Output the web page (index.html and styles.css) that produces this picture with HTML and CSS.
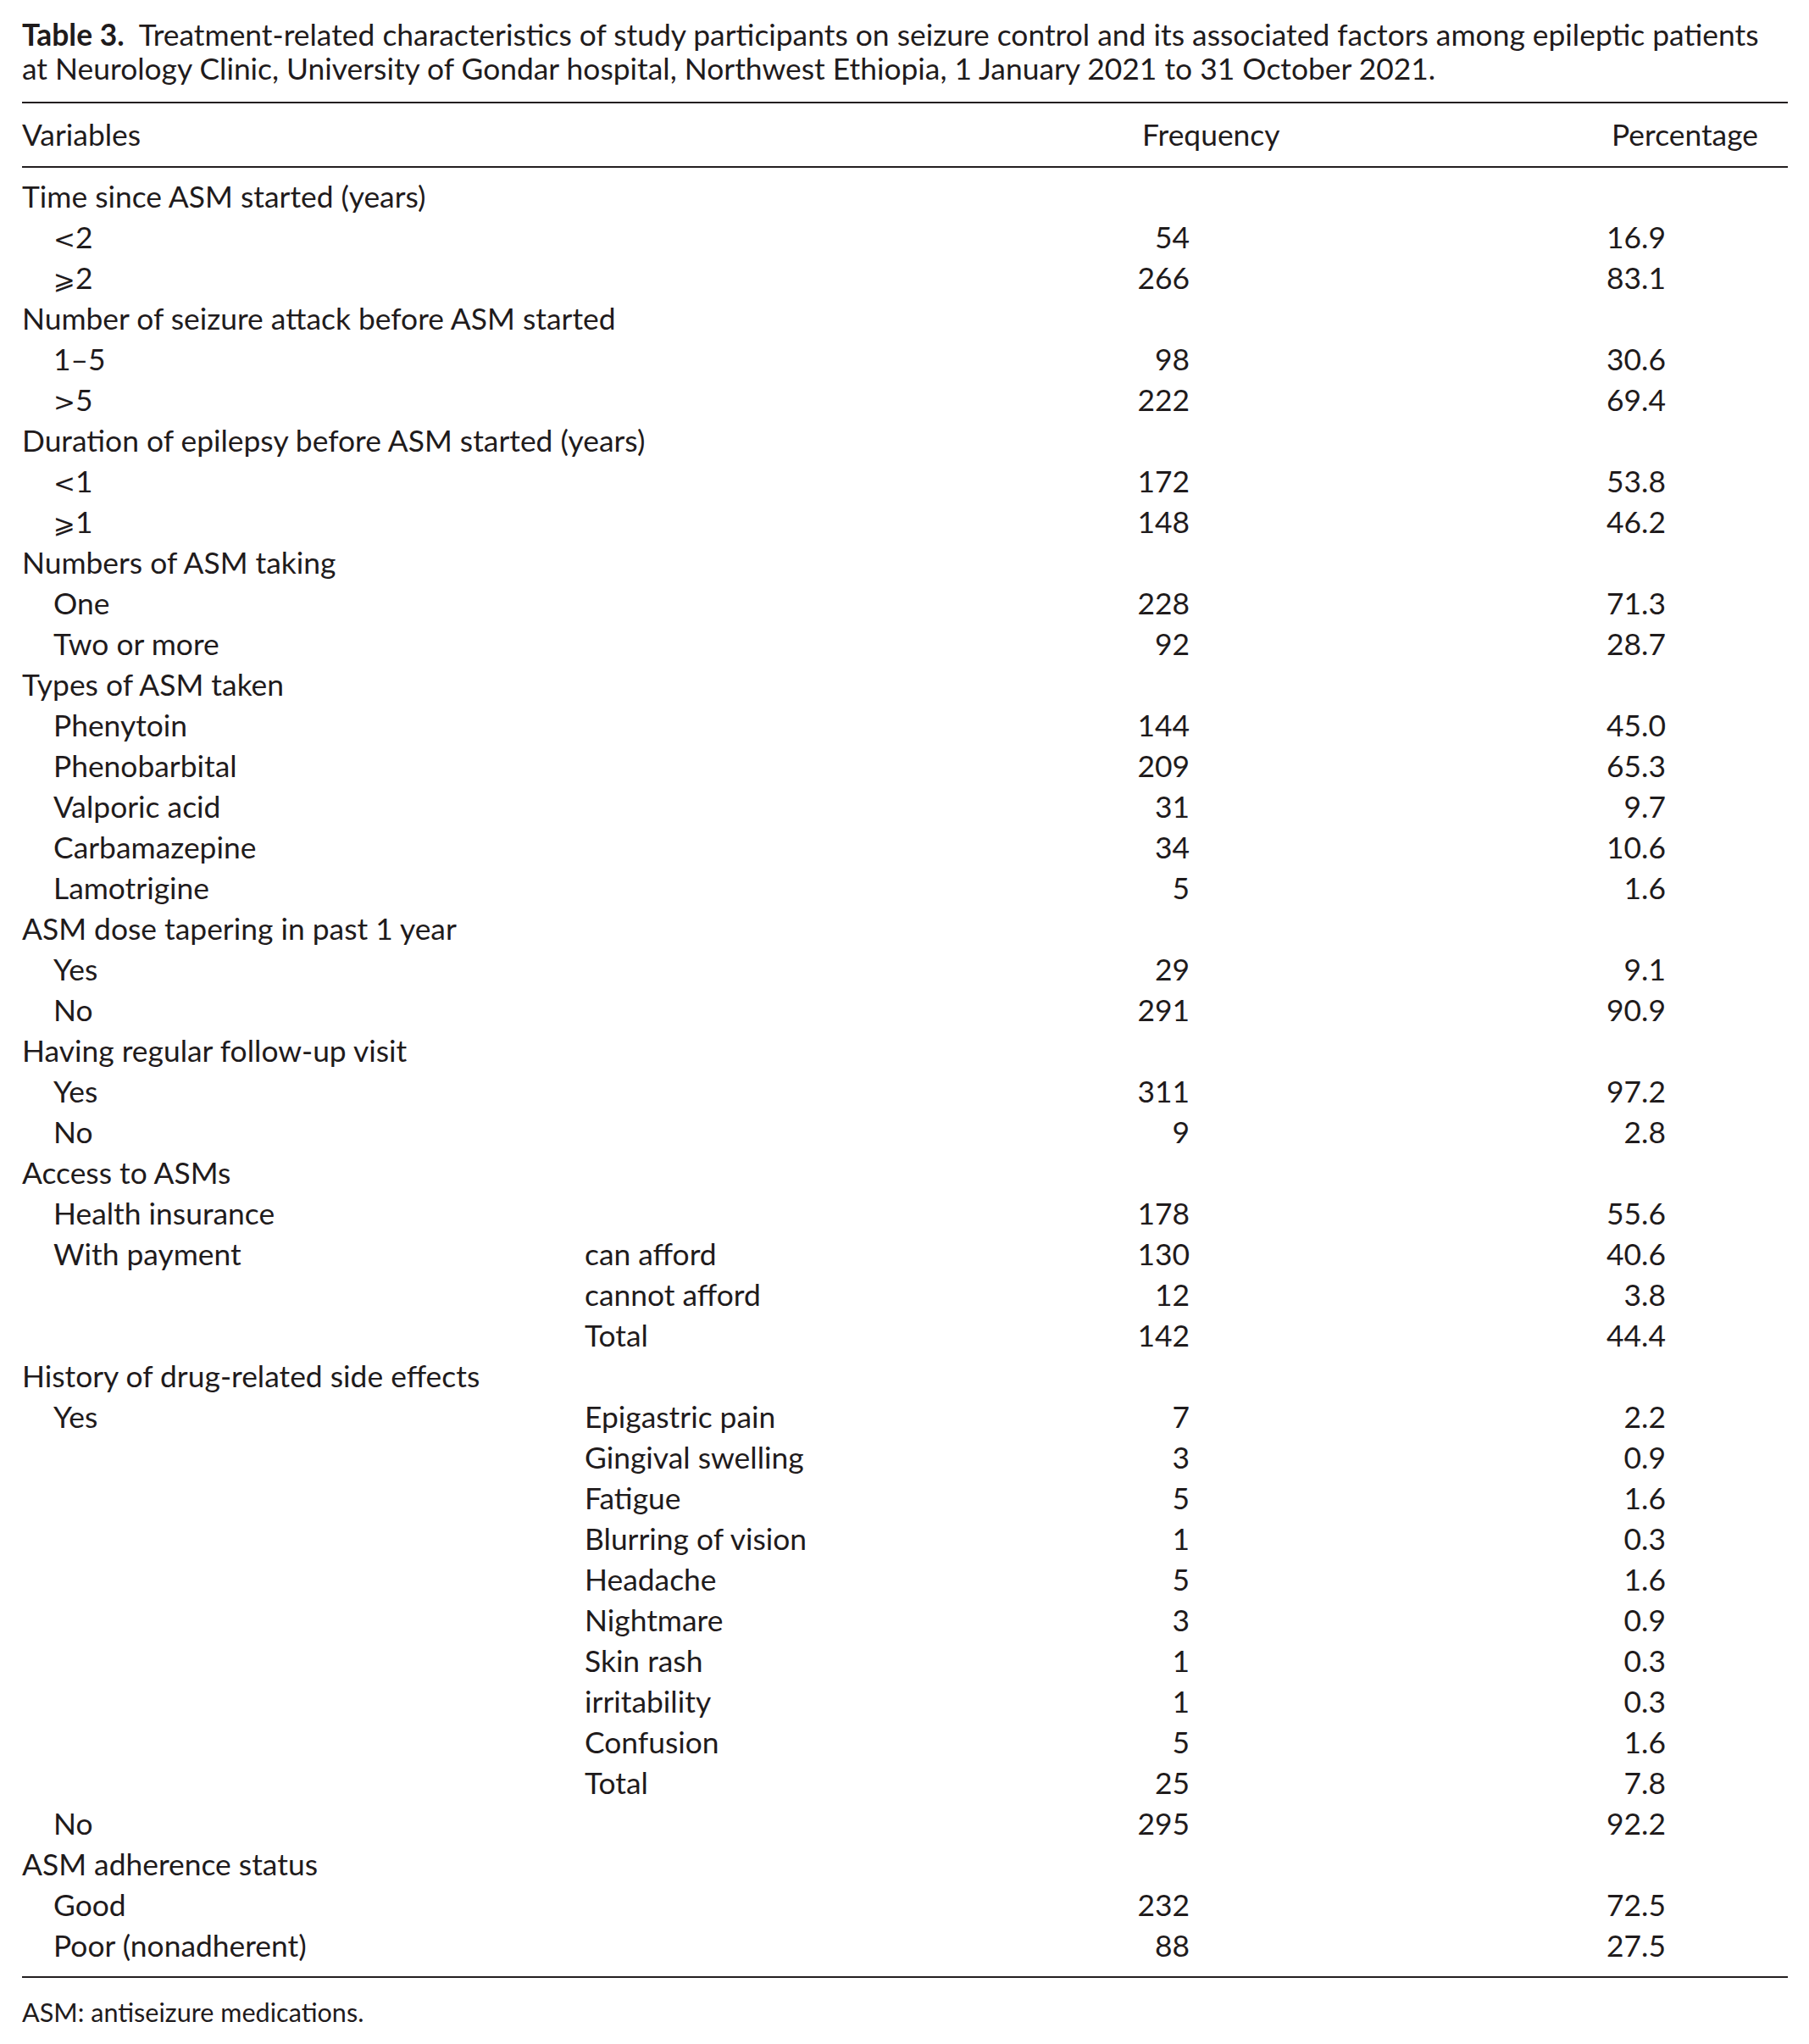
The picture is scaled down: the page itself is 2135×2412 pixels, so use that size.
FILE: index.html
```html
<!DOCTYPE html>
<html lang="en">
<head>
<meta charset="utf-8">
<title>Table 3</title>
<link rel="stylesheet" href="styles.css">
</head>
<body>
<div class="page">
  <p class="caption"><span class="line"><b>Table 3.</b>&nbsp; Treatment-related characteristics of study participants on seizure control and its associated factors among epileptic patients</span><span class="line">at Neurology Clinic, University of Gondar hospital, Northwest Ethiopia, 1 January 2021 to 31 October 2021.</span></p>
  <table class="data">
    <colgroup>
      <col class="c1"><col class="c2"><col class="c3"><col class="c4">
    </colgroup>
    <thead>
      <tr><th>Variables</th><th></th><th>Frequency</th><th>Percentage</th></tr>
    </thead>
    <tbody>
      <tr class="first"><td colspan="4">Time since ASM started (years)</td></tr>
      <tr><td class="ind"><span class="sym">&lt;</span>2</td><td></td><td><span class="f">54</span></td><td><span class="p">16.9</span></td></tr>
      <tr><td class="ind"><span class="sym">⩾</span>2</td><td></td><td><span class="f">266</span></td><td><span class="p">83.1</span></td></tr>
      <tr><td colspan="4">Number of seizure attack before ASM started</td></tr>
      <tr><td class="ind">1–5</td><td></td><td><span class="f">98</span></td><td><span class="p">30.6</span></td></tr>
      <tr><td class="ind"><span class="sym">&gt;</span>5</td><td></td><td><span class="f">222</span></td><td><span class="p">69.4</span></td></tr>
      <tr><td colspan="4">Duration of epilepsy before ASM started (years)</td></tr>
      <tr><td class="ind"><span class="sym">&lt;</span>1</td><td></td><td><span class="f">172</span></td><td><span class="p">53.8</span></td></tr>
      <tr><td class="ind"><span class="sym">⩾</span>1</td><td></td><td><span class="f">148</span></td><td><span class="p">46.2</span></td></tr>
      <tr><td colspan="4">Numbers of ASM taking</td></tr>
      <tr><td class="ind">One</td><td></td><td><span class="f">228</span></td><td><span class="p">71.3</span></td></tr>
      <tr><td class="ind">Two or more</td><td></td><td><span class="f">92</span></td><td><span class="p">28.7</span></td></tr>
      <tr><td colspan="4">Types of ASM taken</td></tr>
      <tr><td class="ind">Phenytoin</td><td></td><td><span class="f">144</span></td><td><span class="p">45.0</span></td></tr>
      <tr><td class="ind">Phenobarbital</td><td></td><td><span class="f">209</span></td><td><span class="p">65.3</span></td></tr>
      <tr><td class="ind">Valporic acid</td><td></td><td><span class="f">31</span></td><td><span class="p">9.7</span></td></tr>
      <tr><td class="ind">Carbamazepine</td><td></td><td><span class="f">34</span></td><td><span class="p">10.6</span></td></tr>
      <tr><td class="ind">Lamotrigine</td><td></td><td><span class="f">5</span></td><td><span class="p">1.6</span></td></tr>
      <tr><td colspan="4">ASM dose tapering in past 1 year</td></tr>
      <tr><td class="ind">Yes</td><td></td><td><span class="f">29</span></td><td><span class="p">9.1</span></td></tr>
      <tr><td class="ind">No</td><td></td><td><span class="f">291</span></td><td><span class="p">90.9</span></td></tr>
      <tr><td colspan="4">Having regular follow-up visit</td></tr>
      <tr><td class="ind">Yes</td><td></td><td><span class="f">311</span></td><td><span class="p">97.2</span></td></tr>
      <tr><td class="ind">No</td><td></td><td><span class="f">9</span></td><td><span class="p">2.8</span></td></tr>
      <tr><td colspan="4">Access to ASMs</td></tr>
      <tr><td class="ind">Health insurance</td><td></td><td><span class="f">178</span></td><td><span class="p">55.6</span></td></tr>
      <tr><td class="ind">With payment</td><td>can afford</td><td><span class="f">130</span></td><td><span class="p">40.6</span></td></tr>
      <tr><td class="ind"></td><td>cannot afford</td><td><span class="f">12</span></td><td><span class="p">3.8</span></td></tr>
      <tr><td class="ind"></td><td>Total</td><td><span class="f">142</span></td><td><span class="p">44.4</span></td></tr>
      <tr><td colspan="4">History of drug-related side effects</td></tr>
      <tr><td class="ind">Yes</td><td>Epigastric pain</td><td><span class="f">7</span></td><td><span class="p">2.2</span></td></tr>
      <tr><td class="ind"></td><td>Gingival swelling</td><td><span class="f">3</span></td><td><span class="p">0.9</span></td></tr>
      <tr><td class="ind"></td><td>Fatigue</td><td><span class="f">5</span></td><td><span class="p">1.6</span></td></tr>
      <tr><td class="ind"></td><td>Blurring of vision</td><td><span class="f">1</span></td><td><span class="p">0.3</span></td></tr>
      <tr><td class="ind"></td><td>Headache</td><td><span class="f">5</span></td><td><span class="p">1.6</span></td></tr>
      <tr><td class="ind"></td><td>Nightmare</td><td><span class="f">3</span></td><td><span class="p">0.9</span></td></tr>
      <tr><td class="ind"></td><td>Skin rash</td><td><span class="f">1</span></td><td><span class="p">0.3</span></td></tr>
      <tr><td class="ind"></td><td>irritability</td><td><span class="f">1</span></td><td><span class="p">0.3</span></td></tr>
      <tr><td class="ind"></td><td>Confusion</td><td><span class="f">5</span></td><td><span class="p">1.6</span></td></tr>
      <tr><td class="ind"></td><td>Total</td><td><span class="f">25</span></td><td><span class="p">7.8</span></td></tr>
      <tr><td class="ind">No</td><td></td><td><span class="f">295</span></td><td><span class="p">92.2</span></td></tr>
      <tr><td colspan="4">ASM adherence status</td></tr>
      <tr><td class="ind">Good</td><td></td><td><span class="f">232</span></td><td><span class="p">72.5</span></td></tr>
      <tr class="last"><td class="ind">Poor (nonadherent)</td><td></td><td><span class="f">88</span></td><td><span class="p">27.5</span></td></tr>
    </tbody>
  </table>
  <p class="note">ASM: antiseizure medications.</p>
</div>
</body>
</html>
```

FILE: styles.css
```css
html, body {
  margin: 0;
  padding: 0;
  background: #ffffff;
}

body {
  font-family: Lato, "Open Sans", "DejaVu Sans", sans-serif;
  color: #1f1b1c;
}

.page {
  padding: 21px 25px 0 26px;
}

.caption {
  margin: 0;
  font-size: 35.4px;
  line-height: 40px;
}

.caption .line {
  display: block;
  white-space: nowrap;
}

.caption b {
  font-weight: 700;
}

.data {
  margin-top: 19px;
  width: 2084px;
  table-layout: fixed;
  border-collapse: collapse;
  border-top: 2px solid #231f20;
  border-bottom: 2px solid #231f20;
  font-size: 35.4px;
  line-height: 48px;
}

.data col.c1 { width: 664px; }
.data col.c2 { width: 658px; }
.data col.c3 { width: 554px; }
.data col.c4 { width: 208px; }

.data th {
  font-weight: 400;
  text-align: left;
  padding: 13px 0 13px 0;
  border-bottom: 2px solid #231f20;
  white-space: nowrap;
}

.data td {
  padding: 0;
  white-space: nowrap;
  vertical-align: baseline;
}

.data tr.first td {
  padding-top: 10px;
}

.data tr.last td {
  padding-bottom: 12px;
}

.data td.ind {
  padding-left: 37px;
}

.f,
.p {
  display: inline-flex;
  justify-content: flex-end;
}

.f {
  width: 56px;
}

.p {
  width: 64px;
}

.sym {
  font-family: "DejaVu Sans", sans-serif;
  font-size: 31px;
  line-height: 1;
}

.note {
  margin: 23px 0 0 0;
  font-size: 30.6px;
  line-height: 36px;
}
```
